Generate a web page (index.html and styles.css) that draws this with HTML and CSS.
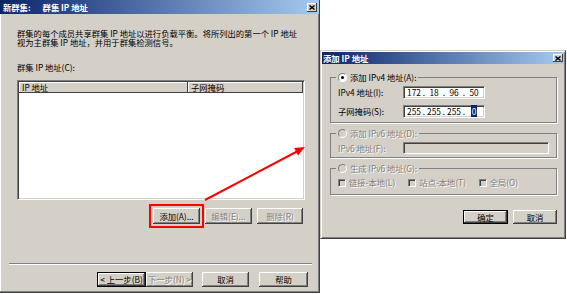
FILE: index.html
```html
<!DOCTYPE html>
<html lang="zh-CN">
<head>
    <meta charset="UTF-8">
    <title>群集 IP 地址</title>
    <link rel="stylesheet" href="styles.css">
</head>
<body>
    <div class="screen">
        <div class="wizard">
            <div class="titlebar">
                <span class="title">新群集:<span class="title-sub">群集 IP 地址</span></span>
                <span class="close"><svg width="6" height="5" viewBox="0 0 6 5"><path d="M0.5 0.5 L5.5 4.5 M5.5 0.5 L0.5 4.5" stroke="#000" stroke-width="1.4"/></svg></span>
            </div>
            <div class="wizard-body">
                <p class="intro">群集的每个成员共享群集 IP 地址以进行负载平衡。将所列出的第一个 IP 地址<br>视为主群集 IP 地址，并用于群集检测信号。</p>
                <div class="list-label">群集 IP 地址(C):</div>
                <div class="listview">
                    <div class="list-head">
                        <span class="col-ip">IP 地址</span>
                        <span class="col-mask">子网掩码</span>
                    </div>
                </div>
                <div class="list-buttons">
                    <button class="btn btn-marked">添加(A)...</button>
                    <button class="btn" disabled>编辑(E)...</button>
                    <button class="btn btn-narrow" disabled>删除(R)</button>
                </div>
                <div class="separator"></div>
                <div class="nav-buttons">
                    <button class="btn btn-default btn-wide">&lt; 上一步(B)</button>
                    <button class="btn" disabled>下一步(N) &gt;</button>
                    <button class="btn btn-gap">取消</button>
                    <button class="btn btn-wide btn-gap">帮助</button>
                </div>
            </div>
        </div>

        <div class="dialog">
            <div class="titlebar small">
                <span class="title">添加 IP 地址</span>
                <span class="close"><svg width="6" height="5" viewBox="0 0 6 5"><path d="M0.5 0.5 L5.5 4.5 M5.5 0.5 L0.5 4.5" stroke="#000" stroke-width="1.4"/></svg></span>
            </div>
            <div class="dialog-body">
                <fieldset class="group group-v4">
                    <legend><span class="radio checked"></span>添加 IPv4 地址(A):</legend>
                    <div class="row">
                        <span class="row-label">IPv4 地址(I):</span>
                        <div class="field">
                            <span class="octet">172</span><span class="dot">.</span>
                            <span class="octet">18</span><span class="dot">.</span>
                            <span class="octet">96</span><span class="dot">.</span>
                            <span class="octet">50</span>
                        </div>
                    </div>
                    <div class="row">
                        <span class="row-label">子网掩码(S):</span>
                        <div class="field">
                            <span class="octet">255</span><span class="dot">.</span>
                            <span class="octet">255</span><span class="dot">.</span>
                            <span class="octet">255</span><span class="dot">.</span>
                            <span class="octet"><span class="selected">0</span></span>
                        </div>
                    </div>
                </fieldset>

                <fieldset class="group group-v6 disabled">
                    <legend><span class="radio"></span>添加 IPv6 地址(D):</legend>
                    <div class="row">
                        <span class="row-label">IPv6 地址(F):</span>
                        <div class="field field-wide"></div>
                    </div>
                </fieldset>

                <fieldset class="group group-gen disabled">
                    <legend><span class="radio"></span>生成 IPv6 地址(G):</legend>
                    <div class="checks">
                        <span class="check-item"><span class="checkbox"></span>链接-本地(L)</span>
                        <span class="check-item"><span class="checkbox"></span>站点-本地(T)</span>
                        <span class="check-item"><span class="checkbox"></span>全局(O)</span>
                    </div>
                </fieldset>

                <div class="dialog-buttons">
                    <button class="btn btn-default btn-ok">确定</button>
                    <button class="btn btn-cancel">取消</button>
                </div>
            </div>
        </div>

        <svg class="arrow" width="567" height="294" viewBox="0 0 567 294">
            <line x1="205" y1="200" x2="297" y2="151.5" stroke="#f00" stroke-width="2"/>
            <polygon points="305,147 298,155.4 294.2,148" fill="#f00"/>
        </svg>
    </div>
</body>
</html>
```

FILE: styles.css
```css
* {
    box-sizing: border-box;
}
body {
    margin: 0;
    background-color: #fff;
    color: #000;
    font-family: "Noto Sans CJK SC", "DejaVu Sans", sans-serif;
    font-size: 8.3px;
    line-height: 9px;
}
.screen {
    position: relative;
    display: flex;
    align-items: flex-start;
    width: 567px;
    height: 294px;
    overflow: hidden;
}

/* window chrome */
.titlebar {
    display: flex;
    align-items: center;
    justify-content: space-between;
    height: 14px;
    padding: 0 2px 0 3px;
    background: linear-gradient(to right, #0a246a, #a6caf0);
    color: #fff;
    font-weight: bold;
    white-space: nowrap;
}
.title-sub {
    margin-left: 12px;
}
.titlebar.small {
    height: 12px;
    padding-left: 1px;
    padding-right: 1px;
}
.close {
    display: flex;
    align-items: center;
    justify-content: center;
    width: 10px;
    height: 9px;
    background-color: #d4d0c8;
    box-shadow: inset -1px -1px #404040, inset 1px 1px #fff;
}
.titlebar.small .close {
    height: 8px;
}

/* wizard (left) */
.wizard {
    display: flex;
    flex-direction: column;
    flex-shrink: 0;
    width: 320px;
    height: 293px;
    background-color: #d4d0c8;
    border-right: 1px solid #404040;
    border-bottom: 1px solid #404040;
    box-shadow: inset -1px -1px #808080, inset 1px 0 #fff;
}
.wizard-body {
    display: flex;
    flex-direction: column;
    padding-left: 17px;
}
.intro {
    margin: 15px 0 0;
    white-space: nowrap;
}
.list-label {
    margin-top: 16px;
}
.listview {
    width: 288px;
    height: 120px;
    margin-top: 8px;
    padding: 1px;
    background-color: #fff;
    border: 1px solid;
    border-color: #808080 #fff #fff #808080;
    box-shadow: inset 1px 1px #404040, inset -1px -1px #d4d0c8;
}
.list-head {
    display: flex;
    height: 11px;
}
.list-head span {
    padding-left: 3px;
    line-height: 11px;
    background-color: #d4d0c8;
    box-shadow: inset -1px -1px #404040, inset 1px 1px #fff;
}
.col-ip {
    width: 169px;
}
.col-mask {
    flex: 1;
}
.list-buttons {
    display: flex;
    justify-content: flex-end;
    gap: 5px;
    width: 288px;
    margin-top: 8px;
    padding-right: 2px;
}
.separator {
    width: 303px;
    height: 2px;
    margin: 39px 0 0 -8px;
    border-top: 1px solid #808080;
    border-bottom: 1px solid #fff;
}
.nav-buttons {
    display: flex;
    margin: 7px 0 0 80px;
}
.nav-buttons .btn {
    height: 15px;
}

/* buttons */
.btn {
    width: 47px;
    height: 16px;
    padding: 0;
    border: none;
    font: inherit;
    color: #000;
    background-color: #d4d0c8;
    box-shadow: inset -1px -1px #404040, inset 1px 1px #fff, inset -2px -2px #808080;
    white-space: nowrap;
}
.btn:disabled {
    color: #808080;
    text-shadow: 1px 1px #fff;
}
.btn-narrow {
    width: 46px;
}
.btn-wide {
    width: 49px;
}
.btn-gap {
    margin-left: 9px;
}
.btn-gap + .btn-gap {
    margin-left: 10px;
}
.btn-default {
    box-shadow: inset 0 0 0 1px #000, inset -2px -2px #404040, inset 2px 2px #fff, inset -3px -3px #808080;
}
.btn-marked {
    outline: 2px solid #f00;
    outline-offset: 2px;
}

/* add ip dialog (right) */
.dialog {
    display: flex;
    flex-direction: column;
    flex-shrink: 0;
    width: 246px;
    height: 189px;
    margin-top: 50px;
    padding: 1px;
    background-color: #d4d0c8;
    border: 1px solid;
    border-color: #d4d0c8 #404040 #404040 #d4d0c8;
    box-shadow: inset 1px 1px #fff, inset -1px -1px #808080;
}
.dialog-body {
    display: flex;
    flex-direction: column;
    padding: 9px 7px 0 8px;
}
.group {
    margin: 0;
    padding: 4px 7px 4px 7px;
    border: 1px solid #808080;
    box-shadow: 1px 1px #fff;
    min-width: 0;
}
.group + .group {
    margin-top: 6px;
}
.group legend {
    display: flex;
    align-items: center;
    gap: 3px;
    margin-left: -2px;
    padding: 0 2px;
    line-height: 9px;
}
.group-v6 {
    padding-bottom: 3px;
}
.group-gen {
    padding-top: 5px;
    padding-bottom: 7px;
}
.disabled {
    color: #808080;
}
.disabled legend,
.disabled .row-label,
.disabled .check-item {
    text-shadow: 1px 1px #fff;
}
.row {
    display: flex;
    align-items: center;
}
.row + .row {
    margin-top: 6px;
}
.row-label {
    width: 65px;
    flex-shrink: 0;
    white-space: nowrap;
}
.field {
    display: flex;
    align-items: center;
    width: 82px;
    height: 13px;
    padding: 0 1px 0 2px;
    background-color: #fff;
    border: 1px solid;
    border-color: #808080 #fff #fff #808080;
    box-shadow: inset 1px 1px #404040, inset -1px -1px #d4d0c8;
}
.field-wide {
    width: 147px;
    height: 12px;
    background-color: #d4d0c8;
}
.octet {
    width: 16px;
    text-align: center;
}
.dot {
    width: 4px;
    text-align: center;
}
.selected {
    padding: 0 1px;
    background-color: #0a246a;
    color: #fff;
}
.radio {
    display: inline-block;
    position: relative;
    width: 9px;
    height: 9px;
    border-radius: 50%;
    border: 1px solid;
    border-color: #808080 #fff #fff #808080;
    background-color: #d4d0c8;
}
.radio.checked {
    background-color: #fff;
}
.radio.checked::after {
    content: "";
    position: absolute;
    left: 2px;
    top: 2px;
    width: 3px;
    height: 3px;
    border-radius: 50%;
    background-color: #000;
}
.checks {
    display: flex;
    height: 9px;
    align-items: center;
}
.check-item {
    display: flex;
    align-items: center;
    gap: 3px;
    width: 76px;
    white-space: nowrap;
}
.checkbox {
    width: 8px;
    height: 8px;
    border: 1px solid;
    border-color: #808080 #fff #fff #808080;
    background-color: #d4d0c8;
    box-shadow: inset 1px 1px #404040;
}
.dialog-buttons {
    display: flex;
    justify-content: flex-end;
    gap: 5px;
    margin-top: 15px;
}
.dialog-buttons .btn {
    height: 14px;
}
.btn-ok {
    width: 45px;
}
.btn-cancel {
    width: 44px;
}

/* red annotation arrow over both windows */
.arrow {
    position: absolute;
    left: 0;
    top: 0;
    pointer-events: none;
}
```
